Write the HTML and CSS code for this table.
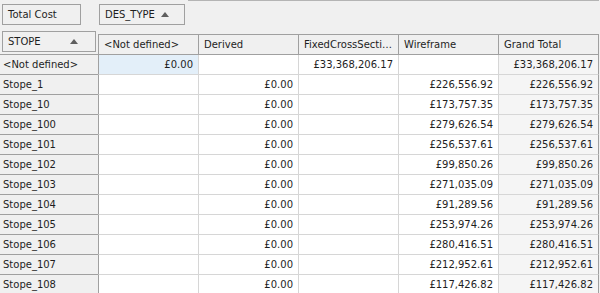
FILE: index.html
```html
<!DOCTYPE html>
<html>
<head>
<meta charset="utf-8">
<link rel="stylesheet" href="styles.css">
</head>
<body>
<div class="pivot">
  <div class="corner">
    <div class="field total">Total Cost</div>
    <div class="field stope">STOPE <svg class="arrow" width="8" height="5" viewBox="0 0 8 5"><path d="M0 5 L4 0 L8 5 Z"/></svg></div>
  </div>
  <div class="colarea">
    <div class="field destype">DES_TYPE <svg class="arrow" width="8" height="5" viewBox="0 0 8 5"><path d="M0 5 L4 0 L8 5 Z"/></svg></div>
  </div>

  <div class="ch first">&lt;Not defined&gt;</div>
  <div class="ch">Derived</div>
  <div class="ch">FixedCrossSection</div>
  <div class="ch">Wireframe</div>
  <div class="ch last">Grand Total</div>

  <div class="rh">&lt;Not defined&gt;</div>
  <div class="c first sel">£0.00</div><div class="c"></div><div class="c">£33,368,206.17</div><div class="c"></div><div class="c last">£33,368,206.17</div>

  <div class="rh">Stope_1</div>
  <div class="c first"></div><div class="c">£0.00</div><div class="c"></div><div class="c">£226,556.92</div><div class="c last">£226,556.92</div>

  <div class="rh">Stope_10</div>
  <div class="c first"></div><div class="c">£0.00</div><div class="c"></div><div class="c">£173,757.35</div><div class="c last">£173,757.35</div>

  <div class="rh">Stope_100</div>
  <div class="c first"></div><div class="c">£0.00</div><div class="c"></div><div class="c">£279,626.54</div><div class="c last">£279,626.54</div>

  <div class="rh">Stope_101</div>
  <div class="c first"></div><div class="c">£0.00</div><div class="c"></div><div class="c">£256,537.61</div><div class="c last">£256,537.61</div>

  <div class="rh">Stope_102</div>
  <div class="c first"></div><div class="c">£0.00</div><div class="c"></div><div class="c">£99,850.26</div><div class="c last">£99,850.26</div>

  <div class="rh">Stope_103</div>
  <div class="c first"></div><div class="c">£0.00</div><div class="c"></div><div class="c">£271,035.09</div><div class="c last">£271,035.09</div>

  <div class="rh">Stope_104</div>
  <div class="c first"></div><div class="c">£0.00</div><div class="c"></div><div class="c">£91,289.56</div><div class="c last">£91,289.56</div>

  <div class="rh">Stope_105</div>
  <div class="c first"></div><div class="c">£0.00</div><div class="c"></div><div class="c">£253,974.26</div><div class="c last">£253,974.26</div>

  <div class="rh">Stope_106</div>
  <div class="c first"></div><div class="c">£0.00</div><div class="c"></div><div class="c">£280,416.51</div><div class="c last">£280,416.51</div>

  <div class="rh">Stope_107</div>
  <div class="c first"></div><div class="c">£0.00</div><div class="c"></div><div class="c">£212,952.61</div><div class="c last">£212,952.61</div>

  <div class="rh">Stope_108</div>
  <div class="c first"></div><div class="c">£0.00</div><div class="c"></div><div class="c">£117,426.82</div><div class="c last">£117,426.82</div>
</div>
</body>
</html>
```

FILE: styles.css
```css
html, body {
  margin: 0;
  padding: 0;
  background: #f0f0f0;
  overflow: hidden;
}
body {
  font-family: "DejaVu Sans", "Liberation Sans", sans-serif;
  font-size: 10px;
  color: #1e1e1e;
}
.pivot {
  display: grid;
  grid-template-columns: 98px 100px 100px 100px 100px 101px;
  grid-template-rows: 34px 21px;
  grid-auto-rows: 20px;
}
.corner {
  grid-row: 1 / 3;
  grid-column: 1;
  border-bottom: 1px solid #a0a0a0;
  padding: 4px 0 0 2px;
  display: flex;
  flex-direction: column;
  gap: 6px;
}
.colarea {
  grid-row: 1;
  grid-column: 2 / 7;
  padding: 4px 0 0 1px;
  position: relative;
}
.colarea::before {
  content: "";
  position: absolute;
  left: 90px;
  right: 0;
  top: 0;
  border-top: 1px solid #b4b4b4;
}
.field {
  box-sizing: border-box;
  height: 21px;
  border: 1px solid #a0a0a0;
  background: #f0f0f0;
  display: flex;
  align-items: center;
  padding: 0 5px;
  white-space: nowrap;
}
.total { width: 79px; }
.stope {
  width: 94px;
  justify-content: space-between;
  padding-right: 17px;
}
.destype {
  width: 86px;
  gap: 6px;
}
.arrow { fill: #5f5f5f; display: block; }
.ch {
  box-sizing: border-box;
  border-top: 1px solid #a0a0a0;
  border-left: 1px solid #a0a0a0;
  border-bottom: 1px solid #a0a0a0;
  background: #f0f0f0;
  padding: 0 4px 0 5px;
  white-space: nowrap;
  overflow: hidden;
  text-overflow: ellipsis;
  display: block;
  line-height: 19px;
}
.ch.last { border-right: 1px solid #a0a0a0; }
.rh {
  box-sizing: border-box;
  background: #f0f0f0;
  border-bottom: 1px solid #a0a0a0;
  padding: 0 3px;
  line-height: 19px;
  white-space: nowrap;
}
.c {
  box-sizing: border-box;
  background: #ffffff;
  border-left: 1px solid #d6d6d6;
  border-bottom: 1px solid #d6d6d6;
  text-align: right;
  padding: 0 5px 0 3px;
  line-height: 19px;
  white-space: nowrap;
}
.c.first { border-left-color: #a0a0a0; }
.c.last {
  background: #f5f5f5;
  border-right: 1px solid #a0a0a0;
}
.c.sel { background: #e3eff9; }
```
